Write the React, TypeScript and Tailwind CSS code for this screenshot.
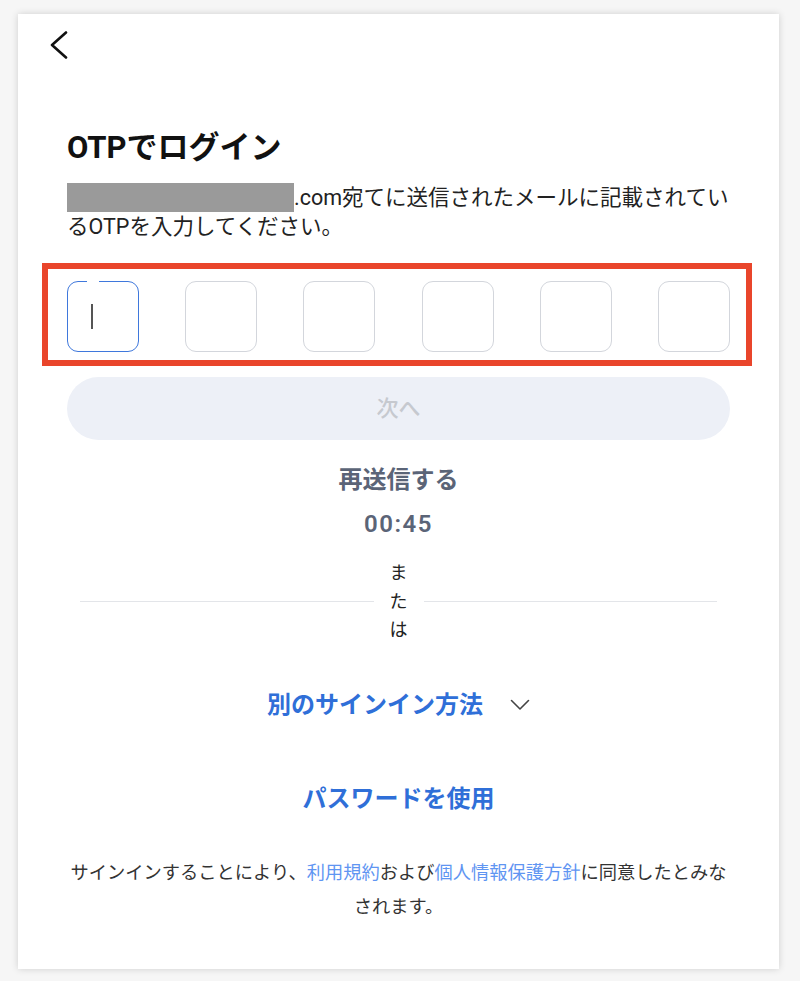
import React from "react";

export default function App() {
  const boxes = [0, 1, 2, 3, 4, 5];
  return (
    <div className="w-[800px] h-[981px] bg-[#f6f6f6] pt-[14px] pl-[18px] font-[family-name:Roboto,'Noto_Sans_CJK_JP',sans-serif] text-[#1a1a1a]">
      <div className="w-[761px] h-[955px] bg-white shadow-[0_0_7px_rgba(0,0,0,0.16)] flex flex-col">
        <div className="pt-[17px] pl-[32px]">
          <svg width="18" height="28" viewBox="0 0 18 28" fill="none">
            <polyline points="16,1.5 2,14 16,26.5" stroke="#111" strokeWidth="2.6" strokeLinecap="round" strokeLinejoin="round" />
          </svg>
        </div>
        <div className="px-[49px] flex flex-col">
          <h1 className="mt-[69px] text-[31px] leading-[40px] font-bold text-[#111]">OTPでログイン</h1>
          <p className="mt-[15px] text-[21.5px] leading-[29px] text-[#222]">
            <span className="inline-block w-[227px] h-[29px] bg-[#9a9a9a] align-top" />
            .com宛てに送信されたメールに記載されているOTPを入力してください。
          </p>
          <div className="relative mt-[40px]">
            <div className="flex justify-between">
              {boxes.map((i) =>
                i === 0 ? (
                  <div key={i} className="relative w-[72px] h-[71px] rounded-[11px] border-[1.5px] border-[#3f78dc] flex items-center">
                    <span className="absolute left-[19px] top-[-3px] w-[12px] h-[4px] bg-white" />
                    <span className="ml-[23px] w-[2px] h-[25px] bg-[#555]" />
                  </div>
                ) : (
                  <div key={i} className="w-[72px] h-[71px] rounded-[11px] border border-[#d3d6dc]" />
                )
              )}
            </div>
            <div className="absolute left-[-25px] right-[-22px] top-[-18px] bottom-[-14px] border-[6px] border-[#e9452b] pointer-events-none" />
          </div>
          <button className="mt-[25px] h-[63px] w-full rounded-full bg-[#edf0f7] text-[22px] font-medium text-[#c6c9cf]">
            次へ
          </button>
          <div className="mt-[25px] text-center text-[24px] leading-[30px] font-semibold text-[#5b6477]">再送信する</div>
          <div className="mt-[14px] text-center text-[24px] leading-[30px] font-semibold tracking-[1.5px] text-[#5b6477]">00:45</div>
          <div className="mt-[20px] mx-[13px] flex items-center">
            <div className="flex-1 h-px bg-[#e3e5e9]" />
            <span className="w-[20px] mx-[15px] text-center text-[18px] leading-[28.5px] text-[#222]">または</span>
            <div className="flex-1 h-px bg-[#e3e5e9]" />
          </div>
          <div className="mt-[44px] flex items-center justify-center">
            <span className="text-[24px] leading-[32px] font-bold text-[#2f6fd8]">別のサインイン方法</span>
            <svg className="ml-[27px]" width="20" height="12" viewBox="0 0 20 12" fill="none">
              <polyline points="1.5,1.5 10,10 18.5,1.5" stroke="#444" strokeWidth="1.6" strokeLinecap="round" strokeLinejoin="round" />
            </svg>
          </div>
          <div className="mt-[62px] text-center text-[24px] leading-[32px] font-bold text-[#2f6fd8]">パスワードを使用</div>
          <p className="mt-[41px] text-center text-[18.25px] leading-[34px] text-[#333]">
            サインインすることにより、<span className="text-[#5f95f2]">利用規約</span>および<span className="text-[#5f95f2]">個人情報保護方針</span>に同意したとみなされます。
          </p>
        </div>
      </div>
    </div>
  );
}
